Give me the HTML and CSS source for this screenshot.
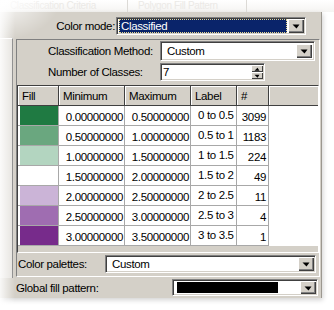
FILE: index.html
```html
<!DOCTYPE html>
<html lang="en">
<head>
    <meta charset="UTF-8">
    <title>Color mode - Classified</title>
    <link rel="stylesheet" href="styles.css">
</head>
<body>
    <div class="shot">
        <div class="tabs">
            <span class="tab">Classification Criteria</span>
            <span class="tab">Polygon Fill Pattern</span>
        </div>

        <div class="dialog">
            <div class="mode-row">
                <span class="lbl">Color mode:</span>
                <div class="combo mode">
                    <span class="value selected">Classified</span>
                    <span class="drop"><i></i></span>
                </div>
            </div>

            <div class="body">
                <div class="side"></div>
                <div class="panel">
                    <div class="field method">
                        <span class="lbl">Classification Method:</span>
                        <div class="combo">
                            <span class="value">Custom</span>
                            <span class="drop"><i></i></span>
                        </div>
                    </div>
                    <div class="field count">
                        <span class="lbl">Number of Classes:</span>
                        <div class="spin">
                            <span class="value">7</span>
                            <span class="arrows">
                                <span class="up"><i></i></span>
                                <span class="down"><i></i></span>
                            </span>
                        </div>
                    </div>

                    <div class="grid">
                        <table>
                            <colgroup>
                                <col class="c-fill">
                                <col class="c-num">
                                <col class="c-num">
                                <col class="c-label">
                                <col class="c-count">
                                <col>
                            </colgroup>
                            <thead>
                                <tr>
                                    <th>Fill</th>
                                    <th>Minimum</th>
                                    <th>Maximum</th>
                                    <th>Label</th>
                                    <th>#</th>
                                    <th class="blank"></th>
                                </tr>
                            </thead>
                            <tbody id="classRows"></tbody>
                        </table>
                    </div>

                    <div class="field palettes">
                        <span class="lbl">Color palettes:</span>
                        <div class="combo">
                            <span class="value">Custom</span>
                            <span class="drop"><i></i></span>
                        </div>
                    </div>
                </div>
            </div>

            <div class="field global">
                <span class="lbl">Global fill pattern:</span>
                <div class="combo">
                    <span class="swatch"></span>
                    <span class="drop"><i></i></span>
                </div>
            </div>
        </div>
    </div>

    <script>
        // class breaks shown in the grid
        const classes = [
            { fill: '#1f7a42', min: 0.0, max: 0.5, label: '0 to 0.5', count: 3099 },
            { fill: '#6aa77f', min: 0.5, max: 1.0, label: '0.5 to 1', count: 1183 },
            { fill: '#b3d5c0', min: 1.0, max: 1.5, label: '1 to 1.5', count: 224 },
            { fill: '#ffffff', min: 1.5, max: 2.0, label: '1.5 to 2', count: 49 },
            { fill: '#cbb4d7', min: 2.0, max: 2.5, label: '2 to 2.5', count: 11 },
            { fill: '#9f6db1', min: 2.5, max: 3.0, label: '2.5 to 3', count: 4 },
            { fill: '#772b8b', min: 3.0, max: 3.5, label: '3 to 3.5', count: 1 }
        ];

        const body = document.getElementById('classRows');
        classes.forEach(c => {
            const row = document.createElement('tr');
            row.innerHTML = `
                <td class="fill"><span style="background:${c.fill}"></span></td>
                <td class="num">${c.min.toFixed(8)}</td>
                <td class="num">${c.max.toFixed(8)}</td>
                <td class="label">${c.label}</td>
                <td class="num count">${c.count}</td>
                <td class="blank"></td>
            `;
            body.appendChild(row);
        });
    </script>
</body>
</html>
```

FILE: styles.css
```css
body {
    margin: 0;
    background: #fff;
    font-family: "Liberation Sans", Arial, sans-serif;
    font-size: 11.5px;
    letter-spacing: -0.35px;
    color: #000;
}
.shot {
    position: relative;
    width: 334px;
    height: 310px;
    overflow: hidden;
}
/* faded edges of the cropped screenshot */
.shot::after {
    content: "";
    position: absolute;
    inset: 0;
    pointer-events: none;
    background:
        radial-gradient(ellipse 60px 40px at 0 0, rgba(255,255,255,0.9), rgba(255,255,255,0)),
        linear-gradient(to right, rgba(255,255,255,0.85) 0, rgba(255,255,255,0.45) 7px, rgba(255,255,255,0) 15px);
}

.tabs {
    display: flex;
    height: 12px;
    overflow: hidden;
    background: linear-gradient(#fff, #f5f4f2);
}
.tab {
    box-sizing: border-box;
    width: 119px;
    padding-left: 10px;
    font-size: 10px;
    line-height: 11px;
    color: #ebe9e6;
    white-space: nowrap;
    overflow: hidden;
    border-right: 1px solid #dcdad6;
}
.tab:first-child {
    width: 128px;
}

.dialog {
    box-sizing: border-box;
    width: 322px;
    height: 286px;
    background: #d4d0c8;
    border-right: 1px solid #9c9890;
    box-shadow: 1px 2px 5px rgba(0,0,0,0.18);
}

/* sunken combo box */
.combo, .spin {
    box-sizing: border-box;
    display: flex;
    align-items: stretch;
    background: #fff;
    border: 1px solid;
    border-color: #808080 #fff #fff #808080;
    box-shadow: inset 1px 1px #404040, inset -1px -1px #d4d0c8;
    padding: 2px;
}
.combo .value, .spin .value {
    flex: 1;
    display: flex;
    align-items: center;
    padding-left: 4px;
    white-space: nowrap;
}
.combo .drop {
    position: relative;
    width: 16px;
    background: #d4d0c8;
    box-shadow: inset 1px 1px #fff, inset -1px -1px #404040, inset -2px -2px #808080;
}
.combo .drop i, .spin .arrows i {
    position: absolute;
    left: 50%;
    top: 50%;
    width: 0;
    height: 0;
    border-left: 4px solid transparent;
    border-right: 3px solid transparent;
    border-top: 4px solid #000;
    transform: translate(-50%, -40%);
}

.mode-row {
    display: flex;
    align-items: center;
    height: 18px;
    padding-top: 5px;
}
.mode-row .lbl {
    width: 115px;
    text-align: right;
}
.combo.mode {
    width: 190px;
    height: 18px;
    margin-left: 1px;
    padding: 1px 1px 1px 2px;
}
.combo .value.selected {
    margin-right: 1px;
    padding-left: 2px;
    background: #0a246a;
    color: #fff;
    outline: 1px dotted #e8d890;
    outline-offset: -1px;
}

.body {
    display: flex;
    margin-top: 3px;
}
.side {
    box-sizing: border-box;
    width: 13px;
    height: 240px;
    border-top: 1px solid #fff;
    border-right: 1px solid #808080;
    background: #e4e1dc;
}
.panel {
    box-sizing: border-box;
    width: 304px;
    height: 238px;
    margin-left: 3px;
    margin-top: 1px;
    border: 1px solid;
    border-color: #808080 #fff #fff #808080;
}

.field {
    display: flex;
    align-items: center;
}
.field .lbl {
    box-sizing: border-box;
    white-space: nowrap;
}
.method {
    margin-top: 1px;
}
.method .lbl, .count .lbl {
    width: 143px;
    padding-left: 31px;
}
.method .combo {
    width: 155px;
    height: 20px;
}
.count {
    margin-top: 2px;
}
.spin {
    width: 105px;
    height: 18px;
    padding: 1px;
}
.spin .value {
    padding-left: 1px;
}
.spin .arrows {
    display: flex;
    flex-direction: column;
    width: 12px;
}
.spin .arrows span {
    position: relative;
    flex: 1;
    background: #d4d0c8;
    box-shadow: inset 1px 1px #fff, inset -1px -1px #404040;
}
.spin .arrows i {
    border-left-width: 3px;
    border-right-width: 2px;
    border-top-width: 3px;
}
.spin .arrows .up i {
    border-top: 0;
    border-bottom: 3px solid #000;
}

/* class grid */
.grid {
    box-sizing: border-box;
    height: 168px;
    margin-top: 4px;
    background: #d4d0c8;
    border: 1px solid;
    border-color: #404040 #fff #fff #404040;
    overflow: hidden;
}
.grid table {
    width: 100%;
    table-layout: fixed;
    border-collapse: separate;
    border-spacing: 0;
}
.c-fill { width: 41px; }
.c-num { width: 66px; }
.c-label { width: 46px; }
.c-count { width: 32px; }
.grid th, .grid td {
    box-sizing: border-box;
    height: 20px;
    padding: 0;
    white-space: nowrap;
    overflow: hidden;
}
.grid th {
    padding-left: 4px;
    text-align: left;
    font-weight: normal;
    background: #d4d0c8;
    border-right: 1px solid #404040;
    border-bottom: 1px solid #404040;
    box-shadow: inset 1px 1px #fff;
}
.grid th.blank {
    border-right: 0;
}
.grid td {
    background: #fff;
    border-right: 1px solid #a8a8a8;
    border-bottom: 1px solid #a8a8a8;
}
.grid td.fill {
    padding-left: 2px;
}
.grid td.fill span {
    display: block;
    height: 19px;
}
.grid td.num {
    text-align: right;
    padding-right: 1px;
    padding-top: 2px;
}
.grid td.count {
    padding-right: 2px;
}
.grid td.label {
    padding-left: 7px;
    padding-bottom: 2px;
}
.grid td.blank {
    border: 0;
}

.palettes {
    margin-top: 2px;
}
.palettes .lbl {
    width: 88px;
    padding-left: 1px;
}
.palettes .combo {
    width: 211px;
    height: 18px;
    padding: 1px 1px 1px 2px;
}

.global {
    margin-top: 1px;
}
.global .lbl {
    width: 172px;
    padding-left: 16px;
}
.global .combo {
    width: 146px;
    height: 17px;
    padding: 1px 1px 1px 2px;
}
.swatch {
    width: 101px;
    margin: 1px auto 1px 2px;
    background: #000;
}
```
